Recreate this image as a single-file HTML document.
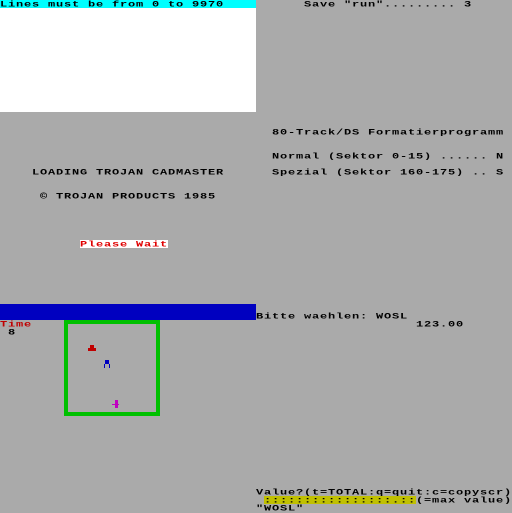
<!DOCTYPE html>
<html><head><style>
body{margin:0;width:512px;height:512px;background:#aaaaaa;position:relative;overflow:hidden}
.t{position:absolute;font-family:"Liberation Mono",monospace;font-size:12px;line-height:12px;height:12px;letter-spacing:0.8px;white-space:pre;color:#000;transform:scaleY(0.7);transform-origin:0 0;font-weight:bold}
.b{position:absolute}
</style></head><body>
<div class="b" style="left:0;top:0;width:256px;height:112px;background:#fff"></div>
<div class="b" style="left:0;top:0;width:256px;height:8px;background:#00ffff"></div>
<div class="t" style="left:0;top:0">Lines must be from 0 to 9970</div>
<div class="t" style="left:304px;top:0">Save "run"......... 3</div>
<div class="t" style="left:272px;top:128px">80-Track/DS Formatierprogramm</div>
<div class="t" style="left:272px;top:152px">Normal (Sektor 0-15) ...... N</div>
<div class="t" style="left:272px;top:168px">Spezial (Sektor 160-175) .. S</div>
<div class="t" style="left:32px;top:168px">LOADING TROJAN CADMASTER</div>
<div class="t" style="left:40px;top:192px">© TROJAN PRODUCTS 1985</div>
<div class="b" style="left:80px;top:240px;width:88px;height:8px;background:#fff"></div>
<div class="t" style="left:80px;top:240px;color:#e00000">Please Wait</div>
<div class="b" style="left:0;top:304px;width:256px;height:16px;background:#0000c0"></div>
<div class="t" style="left:256px;top:312px">Bitte waehlen: WOSL</div>
<div class="t" style="left:416px;top:320px">123.00</div>
<div class="t" style="left:0;top:320px;color:#c00000">Time</div>
<div class="t" style="left:8px;top:328px">8</div>
<div class="b" style="left:64px;top:320px;width:88px;height:88px;border:4px solid #00c000"></div>
<div class="b" style="left:88px;top:348px;width:8px;height:3px;background:#c00000"></div>
<div class="b" style="left:90px;top:345px;width:4px;height:3px;background:#c00000"></div>
<div class="b" style="left:105px;top:360px;width:4px;height:4px;background:#0000c0"></div>
<div class="b" style="left:104px;top:364px;width:6px;height:4px;border-left:1px solid #0000c0;border-right:1px solid #0000c0;box-sizing:border-box"></div>
<div class="b" style="left:115px;top:400px;width:3px;height:8px;background:#c000c0"></div>
<div class="b" style="left:112px;top:404px;width:7px;height:1px;background:#c000c0"></div>
<div class="t" style="left:256px;top:488px">Value?(t=TOTAL:q=quit:c=copyscr)</div>
<div class="b" style="left:264px;top:496px;width:152px;height:8px;background:#c0c000"></div>
<div class="t" style="left:264px;top:496px">::::::::::::::::.::(=max value)</div>
<div class="t" style="left:256px;top:504px">"WOSL"</div>
</body></html>
